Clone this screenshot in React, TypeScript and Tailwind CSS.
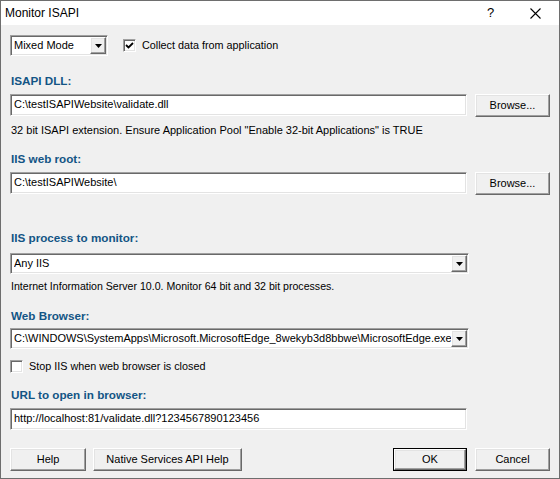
import React from 'react';

const sunken =
  'border border-t-[#a0a0a0] border-l-[#a0a0a0] border-b-white border-r-white shadow-[inset_1px_1px_0_#696969,inset_-1px_-1px_0_#e3e3e3]';
const raised =
  'border border-t-white border-l-white border-b-[#696969] border-r-[#696969] shadow-[inset_-1px_-1px_0_#a0a0a0,inset_1px_1px_0_#e3e3e3]';

function Label({ children, mt }: { children: React.ReactNode; mt: string }) {
  return (
    <div className={`${mt} h-[16px] pl-[1px] text-[11.7px] leading-[16px] font-bold text-[#135585]`}>
      {children}
    </div>
  );
}

function TextBox({ value, w }: { value: string; w: string }) {
  return (
    <div className={`${sunken} ${w} h-[22px] bg-white pl-[3px] text-[11px] leading-[18px] text-black whitespace-nowrap overflow-hidden`}>
      {value}
    </div>
  );
}

function Button({ children, w, isDefault }: { children: React.ReactNode; w: string; isDefault?: boolean }) {
  const inner = (
    <div className={`${raised} h-full w-full bg-[#f0f0f0] flex items-center justify-center text-[11px] text-black`}>
      {children}
    </div>
  );
  if (isDefault) {
    return <div className={`${w} h-[23px] border border-black`}>{inner}</div>;
  }
  return <div className={`${w} h-[23px]`}>{inner}</div>;
}

function ArrowButton() {
  return (
    <div className={`${raised} w-[16px] h-[17px] bg-[#f0f0f0] flex items-center justify-center`}>
      <svg width="7" height="4" viewBox="0 0 7 4">
        <path d="M0 0 H7 L3.5 4 Z" fill="#000" />
      </svg>
    </div>
  );
}

function Select({ value, w }: { value: string; w: string }) {
  return (
    <div className={`${sunken} ${w} h-[21px] bg-white flex items-center pl-[3px] pr-[1px]`}>
      <div className="flex-1 text-[11px] text-black whitespace-nowrap overflow-hidden">{value}</div>
      <ArrowButton />
    </div>
  );
}

function Checkbox({ checked }: { checked?: boolean }) {
  return (
    <div className={`${sunken} w-[13px] h-[13px] bg-white flex items-center justify-center`}>
      {checked && (
        <svg width="9" height="9" viewBox="0 0 9 9">
          <path d="M1 4 L3.5 6.5 L8 2" stroke="#000" strokeWidth="1.8" fill="none" />
        </svg>
      )}
    </div>
  );
}

export default function App() {
  return (
    <div
      className="w-[560px] h-[479px] border border-[#6e6e6e] bg-[#f0f0f0] flex flex-col overflow-hidden"
      style={{ fontFamily: '"Liberation Sans", Arial, sans-serif' }}
    >
      {/* Title bar */}
      <div className="h-[24px] bg-white flex items-center pl-[4px] text-[12px] text-black">
        <span className="flex-1">Monitor ISAPI</span>
        <span className="w-[10px] text-[13px] mr-[33px]">?</span>
        <svg width="11" height="11" viewBox="0 0 11 11" className="mr-[18px]">
          <path d="M0.5 0.5 L10.5 10.5 M10.5 0.5 L0.5 10.5" stroke="#000" strokeWidth="1.1" />
        </svg>
      </div>

      <div className="flex flex-col pl-[9px] pr-[9px]">
        {/* Mode + collect */}
        <div className="mt-[10px] h-[21px] flex items-center">
          <Select value="Mixed Mode" w="w-[98px]" />
          <div className="ml-[15px] flex items-center gap-[6px]">
            <Checkbox checked />
            <span className="text-[10.8px] text-black">Collect data from application</span>
          </div>
        </div>

        <Label mt="mt-[17px]">ISAPI DLL:</Label>
        <div className="mt-[5px] h-[23px] flex items-start gap-[8px]">
          <TextBox value="C:\testISAPIWebsite\validate.dll" w="w-[457px]" />
          <Button w="w-[75px]">Browse...</Button>
        </div>
        <div className="mt-[6px] h-[14px] pl-[1px] text-[11px] leading-[14px] text-black">
          32 bit ISAPI extension. Ensure Application Pool "Enable 32-bit Applications" is TRUE
        </div>

        <Label mt="mt-[14px]">IIS web root:</Label>
        <div className="mt-[5px] h-[23px] flex items-start gap-[8px]">
          <TextBox value="C:\testISAPIWebsite\" w="w-[457px]" />
          <Button w="w-[75px]">Browse...</Button>
        </div>

        <Label mt="mt-[35px]">IIS process to monitor:</Label>
        <div className="mt-[7px]">
          <Select value="Any IIS" w="w-[459px]" />
        </div>
        <div className="mt-[5px] h-[14px] pl-[1px] text-[10.6px] leading-[14px] text-black">
          Internet Information Server 10.0. Monitor 64 bit and 32 bit processes.
        </div>

        <Label mt="mt-[15px]">Web Browser:</Label>
        <div className="mt-[4px]">
          <Select
            value="C:\WINDOWS\SystemApps\Microsoft.MicrosoftEdge_8wekyb3d8bbwe\MicrosoftEdge.exe"
            w="w-[459px]"
          />
        </div>
        <div className="mt-[10px] h-[15px] flex items-center gap-[6px]">
          <Checkbox />
          <span className="text-[10.8px] text-black">Stop IIS when web browser is closed</span>
        </div>

        <Label mt="mt-[13px]">URL to open in browser:</Label>
        <div className="mt-[5px]">
          <TextBox value="http://localhost:81/validate.dll?1234567890123456" w="w-[457px]" />
        </div>

        {/* Bottom buttons */}
        <div className="mt-[18px] h-[23px] flex items-center">
          <Button w="w-[76px]">Help</Button>
          <div className="ml-[7px]">
            <Button w="w-[149px]">Native Services API Help</Button>
          </div>
          <div className="flex-1" />
          <Button w="w-[74px]" isDefault>
            OK
          </Button>
          <div className="ml-[8px]">
            <Button w="w-[75px]">Cancel</Button>
          </div>
        </div>
      </div>
    </div>
  );
}
